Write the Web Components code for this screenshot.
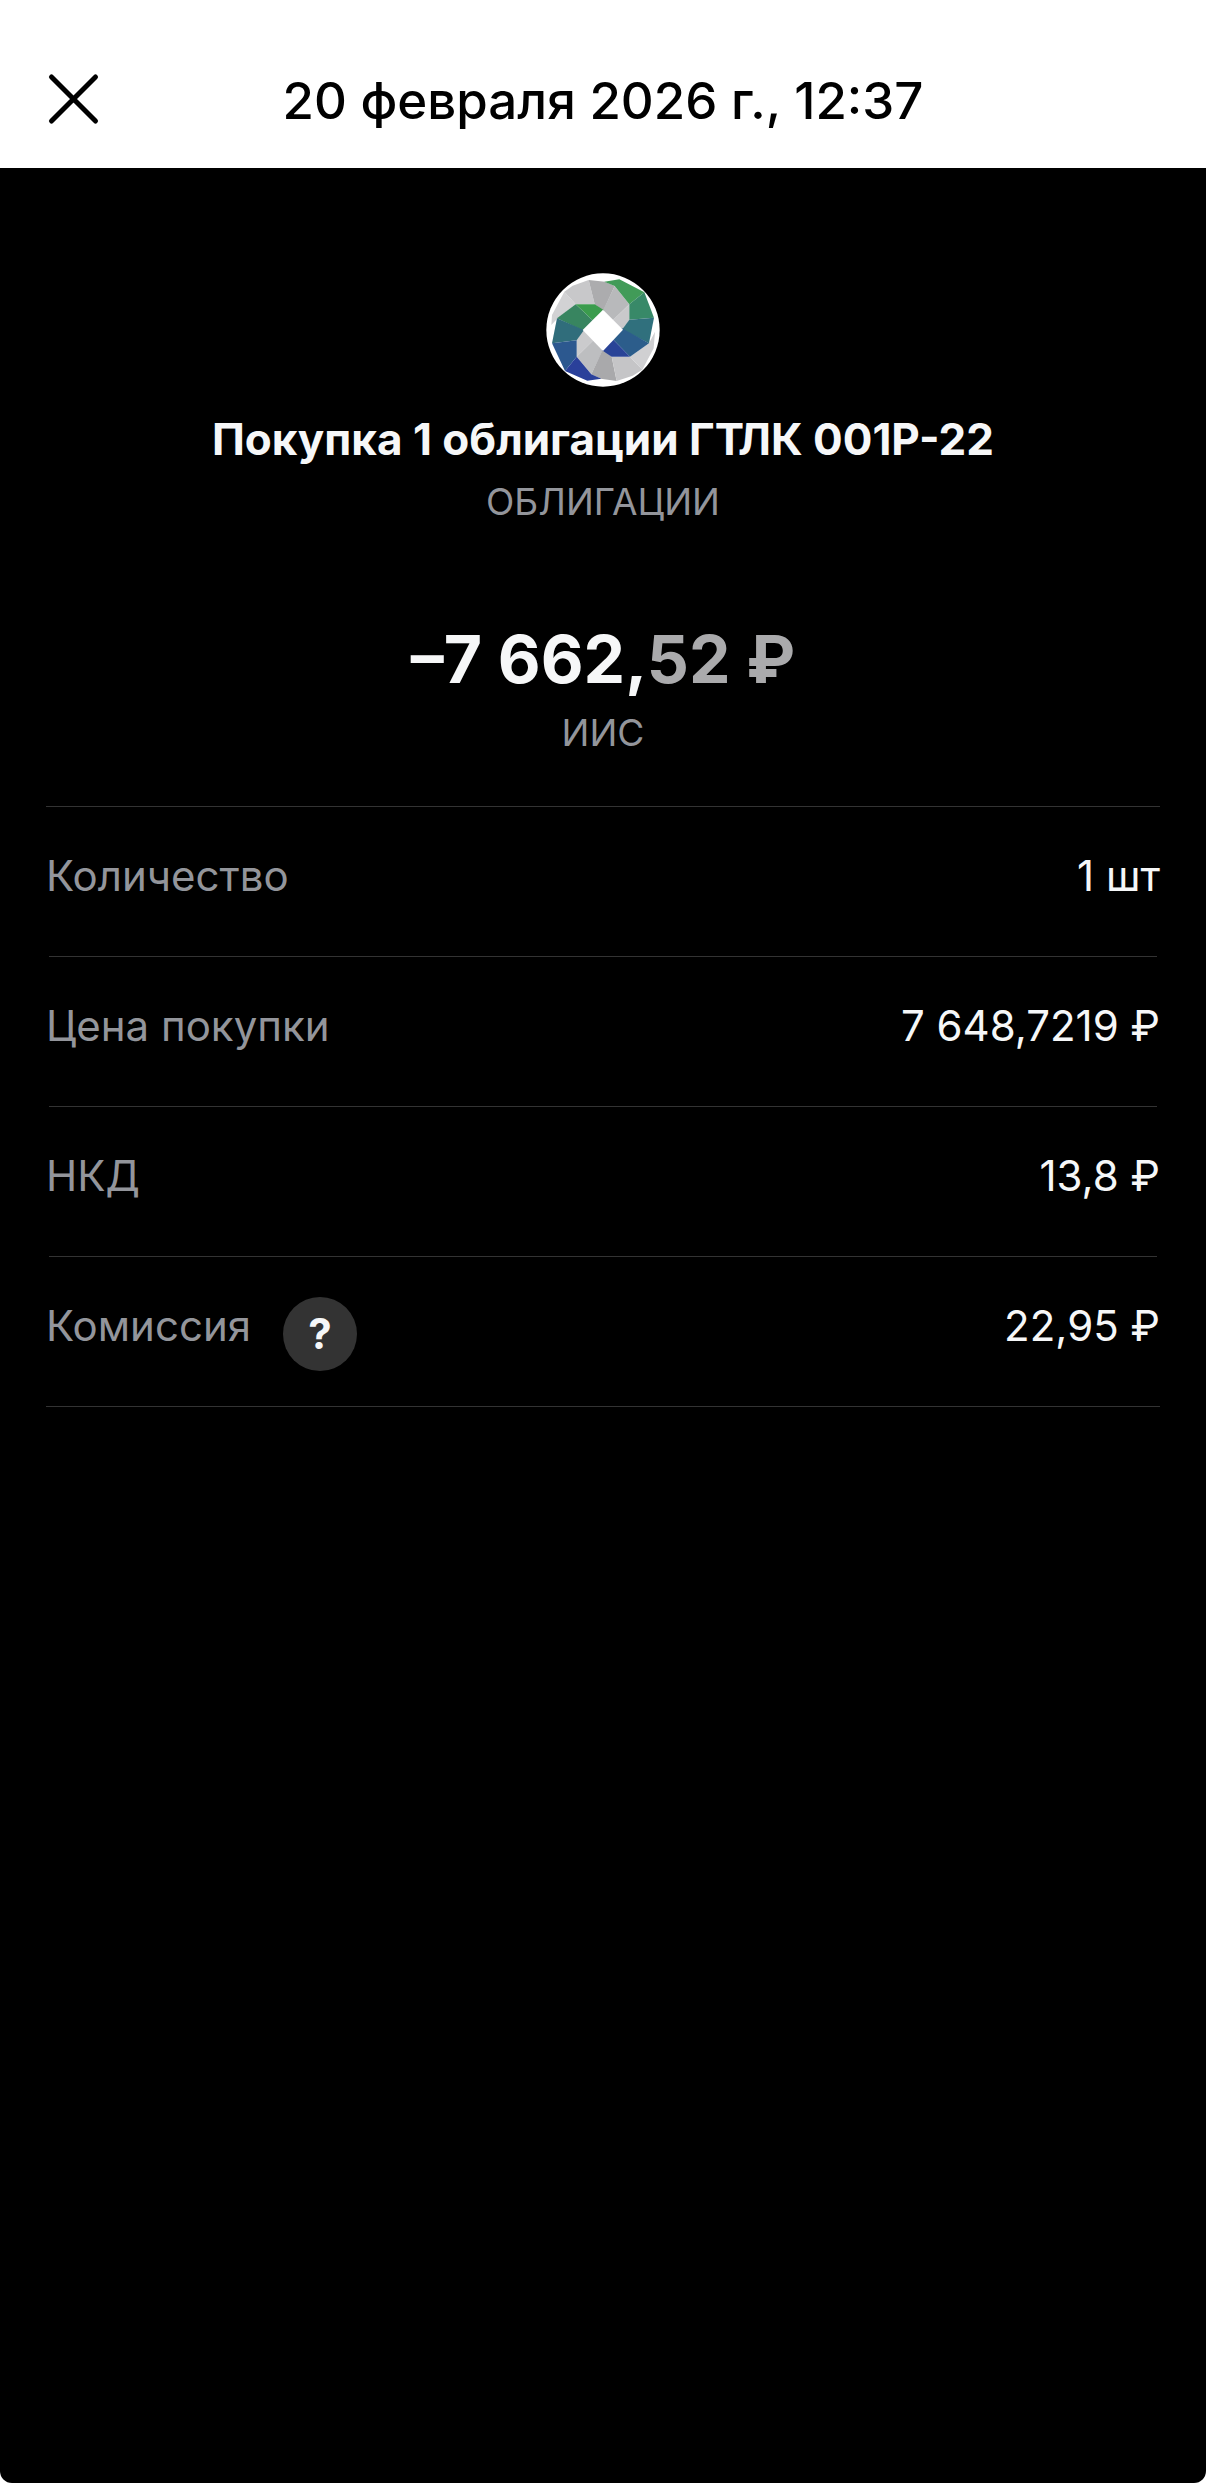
<!DOCTYPE html>
<html lang="ru">
<head>
<meta charset="utf-8">
<meta name="viewport" content="width=device-width, initial-scale=1">
<title>Операция</title>
<style>
  body {
    margin: 0;
    background: #ffffff;
    font-family: Inter, "Noto Sans", sans-serif;
  }
</style>
</head>
<body>
<operation-page>
  <operation-header slot="header">20 февраля 2026 г., 12:37</operation-header>
  <operation-summary>
    <issuer-logo slot="logo"></issuer-logo>
    <span slot="title">Покупка 1 облигации ГТЛК 001P-22</span>
    <span slot="category">ОБЛИГАЦИИ</span>
    <money-amount slot="amount" whole="–7 662," fraction="52 ₽"></money-amount>
    <span slot="account">ИИС</span>
  </operation-summary>
  <detail-list>
    <detail-row label="Количество">1 шт</detail-row>
    <detail-row label="Цена покупки">7 648,7219 ₽</detail-row>
    <detail-row label="НКД">13,8 ₽</detail-row>
    <detail-row label="Комиссия">
      <help-button slot="help"></help-button>
      22,95 ₽
    </detail-row>
  </detail-list>
</operation-page>

<script>
class OperationPage extends HTMLElement {
  constructor() {
    super();
    this.attachShadow({ mode: "open" });
    this.shadowRoot.innerHTML = `
    <style>
      :host {
        display: flex;
        flex-direction: column;
        min-height: 100vh;
      }

      main {
        flex: 1;
        padding: 105px 46px 48px;
        background: #000000;
        border-radius: 0 0 12px 12px;
      }
    </style>
    <slot name="header"></slot>
    <main><slot></slot></main>
    `;
  }
}

class OperationHeader extends HTMLElement {
  constructor() {
    super();
    this.attachShadow({ mode: "open" });
    this.shadowRoot.innerHTML = `
    <style>
      :host {
        display: block;
        background: #ffffff;
        color: #000000;
      }

      header {
        display: grid;
        grid-template-columns: 68px 1fr 68px;
        align-items: center;
        padding: 66px 40px 32px;
      }

      h1 {
        margin: 0;
        font-size: 51px;
        font-weight: 500;
        line-height: 70px;
        text-align: center;
      }

      button {
        width: 68px;
        height: 68px;
        padding: 0;
        border: 0;
        background: none;
        color: inherit;
        cursor: pointer;
      }

      svg {
        display: block;
      }
    </style>
    <header>
      <button type="button" aria-label="Закрыть">
        <svg width="68" height="68" viewBox="0 0 68 68" fill="none" stroke="currentColor" stroke-width="5" stroke-linecap="round">
          <path d="M11.500 10L55.500 54M55.500 10L11.500 54"/>
        </svg>
      </button>
      <h1><slot></slot></h1>
    </header>
    `;
    this.shadowRoot.querySelector("button").addEventListener("click", () => {
      this.dispatchEvent(new Event("close", { bubbles: true, composed: true }));
    });
  }
}

class OperationSummary extends HTMLElement {
  constructor() {
    super();
    this.attachShadow({ mode: "open" });
    this.shadowRoot.innerHTML = `
    <style>
      :host {
        display: block;
        text-align: center;
      }

      section {
        display: flex;
        flex-direction: column;
        align-items: center;
      }

      h2, p {
        margin: 0;
      }

      h2 {
        margin: 24px 0 11px;
        color: #f6f7f8;
        font-size: 44px;
        font-weight: 700;
        line-height: 56px;
      }

      .note {
        color: #93959b;
        font-size: 37px;
        line-height: 48px;
      }

      .amount {
        margin: 93px 0 10px;
      }
    </style>
    <section>
      <slot name="logo"></slot>
      <h2><slot name="title"></slot></h2>
      <p class="note"><slot name="category"></slot></p>
      <p class="amount"><slot name="amount"></slot></p>
      <p class="note"><slot name="account"></slot></p>
    </section>
    `;
  }
}

class MoneyAmount extends HTMLElement {
  constructor() {
    super();
    this.attachShadow({ mode: "open" });
    this.shadowRoot.innerHTML = `
    <style>
      :host {
        display: block;
        color: #f6f7f8;
        font-size: 66px;
        font-weight: 700;
        line-height: 80px;
        white-space: nowrap;
      }

      .fraction {
        color: #aaaaac;
      }
    </style>
    <span class="whole"></span><span class="fraction"></span>
    `;
  }

  connectedCallback() {
    this.shadowRoot.querySelector(".whole").textContent = this.getAttribute("whole");
    this.shadowRoot.querySelector(".fraction").textContent = this.getAttribute("fraction");
  }
}

class IssuerLogo extends HTMLElement {
  constructor() {
    super();
    this.attachShadow({ mode: "open" });
    this.shadowRoot.innerHTML = `
    <style>
      :host {
        display: block;
        width: 114px;
        height: 114px;
      }

      svg {
        display: block;
      }
    </style>
    <svg width="114" height="114" viewBox="20 24 342 342" aria-hidden="true">
      <defs>
        <clipPath id="disc"><circle cx="191" cy="195" r="170"/></clipPath>
      </defs>
      <circle cx="191" cy="195" r="170" fill="#ffffff"/>
      <g clip-path="url(#disc)">
        <!-- grey ribbon, top -->
        <path fill="#d2d2d4" d="M36 180L38 150L75 80L109 118L55 160Z"/>
        <path fill="#c8c8ca" d="M75 80L109 118H166L148 45L100 62Z"/>
        <path fill="#acacae" d="M148 45L197 50L226 63L191 140L166 118Z"/>
        <path fill="#b8b9bb" d="M226 63L270 118L216 170L191 136Z"/>
        <path fill="#c9c9cb" d="M270 118V166L248 196L216 170Z"/>
        <!-- grey ribbon, bottom -->
        <path fill="#cbcbcd" d="M112 275V226L132 192L166 222Z"/>
        <path fill="#bdbec0" d="M112 275L166 222L191 254L156 328Z"/>
        <path fill="#a9a9ab" d="M191 252L217 275L232 348L184 341L156 328Z"/>
        <path fill="#c5c5c7" d="M217 275H272L309 314L280 332L232 348Z"/>
        <path fill="#d0d0d2" d="M272 275L329 235L347 200L343 250L309 314Z"/>
        <!-- coloured ribbon, right -->
        <path fill="#419b58" d="M195 50L240 43L315 82L270 118L226 63Z"/>
        <path fill="#388968" d="M315 82L344 158L270 164V118Z"/>
        <path fill="#30707d" d="M344 158L329 235L248 194L270 164Z"/>
        <path fill="#2c5d8b" d="M329 235L272 275L214 216L248 190Z"/>
        <path fill="#294397" d="M272 275H217L188 256L214 216Z"/>
        <!-- coloured ribbon, left -->
        <path fill="#3b9c4d" d="M109 118H166L194 136L166 172Z"/>
        <path fill="#388560" d="M109 118L166 172L134 198L53 160Z"/>
        <path fill="#306d7b" d="M53 160L134 195L112 226L38 235Z"/>
        <path fill="#2c588f" d="M38 235L112 226V275L77 318Z"/>
        <path fill="#2a409a" d="M77 318L112 275L156 328L186 341L144 347Z"/>
      </g>
      <path fill="#ffffff" d="M191 134L251 194L191 258L130 195Z"/>
    </svg>
    `;
  }
}

class DetailList extends HTMLElement {
  constructor() {
    super();
    this.attachShadow({ mode: "open" });
    this.shadowRoot.innerHTML = `
    <style>
      :host {
        display: block;
        margin-top: 49px;
        border-top: 1px solid #333333;
        border-bottom: 1px solid #333333;
      }

      ::slotted(:not(:first-child)) {
        border-top: 1px solid #333333;
      }
    </style>
    <slot></slot>
    `;
  }
}

class DetailRow extends HTMLElement {
  constructor() {
    super();
    this.attachShadow({ mode: "open" });
    this.shadowRoot.innerHTML = `
    <style>
      /* the divider is a little shorter than the row's text */
      :host {
        display: block;
        margin: 0 3px;
      }

      dl {
        display: flex;
        align-items: flex-start;
        min-height: 74px;
        margin: 0 -3px;
        padding: 40px 0 35px;
        font-size: 42px;
        line-height: 58px;
      }

      dt {
        display: flex;
        align-items: flex-start;
        gap: 32px;
        color: #93959b;
      }

      dd {
        flex: 1;
        margin: 0;
        color: #f6f7f8;
        text-align: right;
      }
    </style>
    <dl>
      <dt><span class="label"></span><slot name="help"></slot></dt>
      <dd><slot></slot></dd>
    </dl>
    `;
  }

  connectedCallback() {
    this.shadowRoot.querySelector(".label").textContent = this.getAttribute("label");
  }
}

class HelpButton extends HTMLElement {
  constructor() {
    super();
    this.attachShadow({ mode: "open" });
    this.shadowRoot.innerHTML = `
    <style>
      :host {
        display: block;
      }

      button {
        display: block;
        width: 74px;
        height: 74px;
        padding: 0;
        border: 0;
        border-radius: 50%;
        background: #333333;
        color: #f6f7f8;
        font: inherit;
        font-weight: 700;
        cursor: pointer;
      }
    </style>
    <button type="button" aria-label="О комиссии">?</button>
    `;
  }
}

customElements.define("operation-page", OperationPage);
customElements.define("operation-header", OperationHeader);
customElements.define("operation-summary", OperationSummary);
customElements.define("money-amount", MoneyAmount);
customElements.define("issuer-logo", IssuerLogo);
customElements.define("detail-list", DetailList);
customElements.define("detail-row", DetailRow);
customElements.define("help-button", HelpButton);
</script>
</body>
</html>
